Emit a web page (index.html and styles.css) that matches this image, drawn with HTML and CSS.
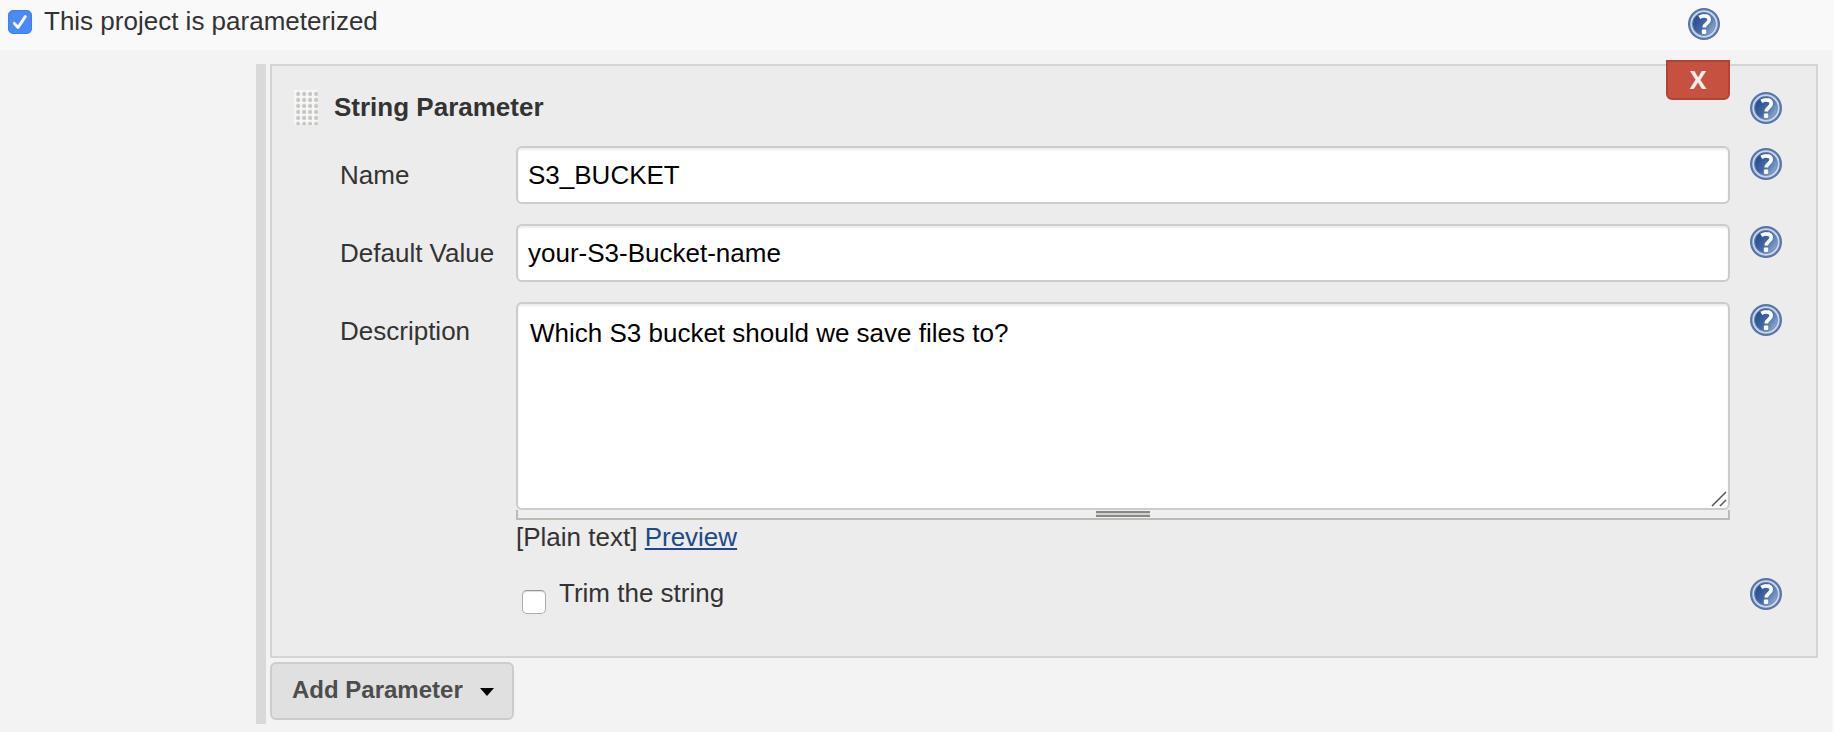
FILE: index.html
```html
<!DOCTYPE html>
<html lang="en">
<head>
<meta charset="utf-8">
<title>Project configuration</title>
<link rel="stylesheet" href="styles.css">
</head>
<body>
<svg class="defs" aria-hidden="true">
  <defs>
    <linearGradient id="disc" x1="0.15" y1="0.3" x2="0.9" y2="0.8">
      <stop offset="0" stop-color="#2a4f8d"/>
      <stop offset="0.45" stop-color="#4268a4"/>
      <stop offset="1" stop-color="#90add2"/>
    </linearGradient>
    <symbol id="help" viewBox="0 0 32 32">
      <circle cx="16" cy="16" r="16" fill="#5876aa"/>
      <circle cx="16" cy="16" r="12.700" fill="url(#disc)" stroke="#c9d5e7" stroke-width="2"/>
      <circle cx="16" cy="16" r="11.400" fill="none" stroke="#6f8dba" stroke-width=".8"/>
      <path d="M11.300 9.400Q13.800 7.800 16.300 7.900c3.300 0 4.900 1.500 4.900 3.800 0 3.800-5 3.600-5 7.900" fill="none" stroke="#fff" stroke-width="3.700"/>
      <rect x="13.900" y="21.600" width="4.300" height="4.300" rx=".8" fill="#fff"/>
    </symbol>
  </defs>
</svg>
<main class="page">
  <header class="toggle-row">
    <label class="toggle">
      <span class="check check-on"><svg viewBox="0 0 24 24"><path d="M6.300 13.400 10 17.500 17.300 6.600" fill="none" stroke="#fff" stroke-width="2.900" stroke-linecap="round" stroke-linejoin="round"/></svg></span>
      <span class="toggle-text">This project is parameterized</span>
    </label>
    <svg class="help"><use href="#help"/></svg>
  </header>
  <div class="content">
    <section class="group">
      <div class="card">
        <button class="delete">X</button>
        <div class="row title-row">
          <div class="heading"><span class="grip"></span><span class="title">String Parameter</span></div>
          <svg class="help"><use href="#help"/></svg>
        </div>
        <div class="row field">
          <label class="label">Name</label>
          <input class="input" type="text" value="S3_BUCKET">
          <svg class="help"><use href="#help"/></svg>
        </div>
        <div class="row field">
          <label class="label">Default Value</label>
          <input class="input" type="text" value="your-S3-Bucket-name">
          <svg class="help"><use href="#help"/></svg>
        </div>
        <div class="row description">
          <label class="label">Description</label>
          <div class="editor">
            <textarea class="input area">Which S3 bucket should we save files to?</textarea>
            <svg class="resize" viewBox="0 0 16 16"><path d="M1 15 15 1M9 15 15 9" stroke="#555" stroke-width="1.500"/></svg>
            <div class="handle"><span class="handle-grip"></span></div>
            <div class="format">[Plain text] <a class="link" href="#">Preview</a></div>
          </div>
          <svg class="help"><use href="#help"/></svg>
        </div>
        <div class="row trim">
          <label class="trim-label"><span class="check check-off"></span><span>Trim the string</span></label>
          <svg class="help"><use href="#help"/></svg>
        </div>
      </div>
      <button class="add"><span>Add Parameter</span><svg class="caret" viewBox="0 0 14 8"><path d="M0 0H14L7 8Z"/></svg></button>
    </section>
  </div>
</main>
</body>
</html>
```
FILE: styles.css
```css
* { box-sizing: border-box; }
body {
  margin: 0;
  background: #f9f9f9;
  color: #333;
  font: 26px/30px "Liberation Sans", Arial, sans-serif;
}
.defs { position: absolute; width: 0; height: 0; }
.page { height: 732px; overflow: hidden; }
.help { display: block; width: 32px; height: 32px; }
.toggle-row {
  display: flex;
  justify-content: space-between;
  height: 50px;
  padding: 6px 114px 0 8px;
}
.toggle { display: flex; gap: 12px; }
.toggle-row .help { margin-top: 2px; }
.check { display: block; width: 24px; height: 24px; border-radius: 5px; }
.check-on {
  margin-top: 4px;
  background: #4a8af6;
  border: 1px solid #3f80ee;
}
.check-on svg { display: block; width: 24px; height: 24px; margin: -1px; }
.check-off {
  margin-top: 12px;
  background: #fff;
  border: 1px solid #adadad;
  border-top-color: #959595;
  box-shadow: inset 0 1px 1px #ddd;
}
.content {
  height: 682px;
  margin-right: 2px;
  padding: 14px 14px 8px 256px;
  background: #f3f3f3;
}
.group { height: 660px; padding-left: 4px; border-left: 10px solid #d9d9d9; }
.card {
  position: relative;
  height: 594px;
  padding: 24px 34px 0 22px;
  background: #ececec;
  border: 2px solid #d4d4d4;
}
.delete {
  position: absolute;
  top: -6px;
  right: 86px;
  width: 64px;
  height: 40px;
  padding: 0 0 2px;
  background: #c65141;
  border: 2px solid #b14435;
  border-radius: 0 0 6px 6px;
  color: #f1eeee;
  font: bold 25px/34px "Open Sans", sans-serif;
}
.row {
  display: grid;
  grid-template-columns: 222px 1214px 52px;
  align-items: start;
}
.row .help { grid-column: 3; margin-left: 20px; }
.title-row { height: 56px; }
.title-row .help { margin-top: 2px; }
.heading { grid-column: 1 / 3; display: flex; gap: 16px; font-weight: bold; }
.title { margin-top: 2px; }
.grip {
  width: 24px;
  height: 35px;
  background: radial-gradient(circle at 4.2px 4px, #bfbfbf 0, #cbcbca 1.5px, #f7f7f5 3px) 0 0 / 6px 6px;
}
.field { height: 78px; }
.label { padding: 14px 0 0 46px; white-space: nowrap; }
.field .help, .description .help { margin-top: 2px; }
.input {
  display: block;
  width: 100%;
  height: 58px;
  margin: 0;
  padding: 0 10px;
  background: #fff;
  border: 2px solid #ccc;
  border-radius: 6px;
  box-shadow: inset 0 2px 2px rgba(0, 0, 0, .075);
  color: #000;
  font: inherit;
}
.area { height: 208px; padding: 14px 12px; resize: none; overflow: hidden; }
.description { height: 274px; }
.editor { position: relative; }
.resize { position: absolute; top: 189px; right: 3px; width: 16px; height: 16px; }
.handle {
  height: 10px;
  padding-top: 1px;
  background: #eee;
  border: solid #bbbbb3;
  border-width: 0 2px 2px;
}
.handle-grip {
  display: block;
  width: 54px;
  height: 6px;
  margin: 0 auto;
  background: #d0d2cf;
  border: solid #888;
  border-width: 2px 0;
}
.format { padding-top: 2px; }
.link { color: #204a87; text-decoration-thickness: 2px; text-underline-offset: 2px; }
.trim-label { grid-column: 2; display: flex; gap: 13px; padding: 2px 0 0 6px; }
.trim .help { margin-top: 2px; }
.add {
  display: flex;
  align-items: center;
  gap: 17px;
  width: 244px;
  height: 58px;
  margin-top: 4px;
  padding: 0 0 2px 20px;
  background: #e0e0e0;
  border: 2px solid #ccc;
  border-radius: 6px;
  color: #4d4d4d;
  font: bold 24px/28px "Liberation Sans", Arial, sans-serif;
}
.caret { width: 14px; height: 8px; margin-top: 4px; }
```
